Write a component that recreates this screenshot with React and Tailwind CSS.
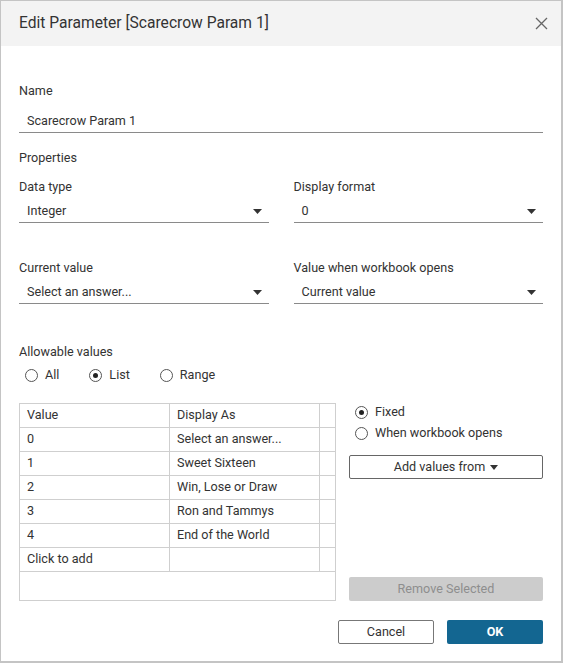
import React from "react";

const font = { fontFamily: "Roboto, 'Liberation Sans', Arial, sans-serif" };

function Arrow() {
  return (
    <svg width="9" height="5" viewBox="0 0 9 5" className="shrink-0">
      <path d="M0 0 L9 0 L4.5 5 Z" fill="#333" />
    </svg>
  );
}

function Radio({ checked, label }) {
  return (
    <div className="flex items-center gap-[7px] h-4">
      <span className="w-[13px] h-[13px] rounded-full border border-[#555] flex items-center justify-center bg-white shrink-0">
        {checked && <span className="w-[5px] h-[5px] rounded-full bg-[#222]" />}
      </span>
      <span className="text-[12.6px] text-[#333] leading-4">{label}</span>
    </div>
  );
}

function Select({ value }) {
  return (
    <div className="h-[22px] border-b border-[#8a8a8a] flex items-center justify-between pl-[8px] pr-[7px] pb-[1px]">
      <span className="text-[12.6px] text-[#333] leading-4">{value}</span>
      <Arrow />
    </div>
  );
}

function Label({ children, className = "" }) {
  return <div className={"h-4 text-[12.6px] leading-4 text-[#333] " + className}>{children}</div>;
}

const rows = [
  ["0", "Select an answer..."],
  ["1", "Sweet Sixteen"],
  ["2", "Win, Lose or Draw"],
  ["3", "Ron and Tammys"],
  ["4", "End of the World"],
  ["Click to add", ""],
];

function Row({ a, b }) {
  return (
    <div className="flex h-6 border-b border-[#cfcfcf]">
      <div className="w-[150px] border-r border-[#cfcfcf] pl-[7px] flex items-center text-[12.6px] text-[#333]">{a}</div>
      <div className="w-[150px] border-r border-[#cfcfcf] pl-[7px] flex items-center text-[12.6px] text-[#333]">{b}</div>
      <div className="flex-1" />
    </div>
  );
}

export default function App() {
  return (
    <div style={font} className="w-[563px] h-[663px] bg-white border-t border-l border-r-2 border-b-2 border-[#c4c4c4] flex flex-col overflow-hidden">
      <div className="h-[45px] bg-[#f3f3f3] flex items-center justify-between pl-[18px] pr-[13px] shrink-0">
        <span className="text-[15.6px] text-[#333]">Edit Parameter [Scarecrow Param 1]</span>
        <svg width="13" height="13" viewBox="0 0 13 13">
          <path d="M1 1 L12 12 M12 1 L1 12" stroke="#666" strokeWidth="1.3" />
        </svg>
      </div>
      <div className="pl-[18px] pr-[18px] flex flex-col">
        <Label className="mt-[37px]">Name</Label>
        <div className="mt-[12px] h-[22px] border-b border-[#8a8a8a] flex items-center pl-[8px]">
          <span className="text-[12.6px] text-[#333]">Scarecrow Param 1</span>
        </div>
        <Label className="mt-[17px]">Properties</Label>
        <div className="grid grid-cols-2 gap-x-[25px]">
          <div className="flex flex-col">
            <Label className="mt-[13px]">Data type</Label>
            <div className="mt-[6px]"><Select value="Integer" /></div>
            <Label className="mt-[37px]">Current value</Label>
            <div className="mt-[6px]"><Select value="Select an answer..." /></div>
          </div>
          <div className="flex flex-col">
            <Label className="mt-[13px]">Display format</Label>
            <div className="mt-[6px]"><Select value="0" /></div>
            <Label className="mt-[37px]">Value when workbook opens</Label>
            <div className="mt-[6px]"><Select value="Current value" /></div>
          </div>
        </div>
        <Label className="mt-[40px]">Allowable values</Label>
        <div className="mt-[7px] flex items-center gap-[30px] pl-[6px]">
          <Radio label="All" />
          <Radio checked label="List" />
          <Radio label="Range" />
        </div>
        <div className="mt-[20px] flex gap-[13px] h-[198px]">
          <div className="w-[317px] border border-[#cfcfcf] flex flex-col">
            <Row a="Value" b="Display As" />
            {rows.map((r, i) => (
              <Row key={i} a={r[0]} b={r[1]} />
            ))}
          </div>
          <div className="flex-1 flex flex-col">
            <div className="pl-[6px] pt-[1px] flex flex-col gap-[5px]">
              <Radio checked label="Fixed" />
              <Radio label="When workbook opens" />
            </div>
            <button className="mt-[14px] h-[24px] border border-[#666] rounded-[2px] bg-white text-[12.6px] text-[#333] flex items-center justify-center gap-[5px]">
              Add values from
              <svg width="8" height="5" viewBox="0 0 8 5"><path d="M0 0 L8 0 L4 5 Z" fill="#333" /></svg>
            </button>
            <button className="mt-auto h-[24px] rounded-[2px] bg-[#cccccc] text-[12.6px] text-[#8e8e8e] flex items-center justify-center">
              Remove Selected
            </button>
          </div>
        </div>
        <div className="mt-[19px] flex justify-end gap-[13px]">
          <button className="w-[96px] h-[24px] border border-[#777] rounded-[2px] bg-white text-[12.6px] text-[#333]">Cancel</button>
          <button className="w-[96px] h-[24px] rounded-[2px] bg-[#136691] text-[12.6px] text-white font-bold">OK</button>
        </div>
      </div>
    </div>
  );
}
